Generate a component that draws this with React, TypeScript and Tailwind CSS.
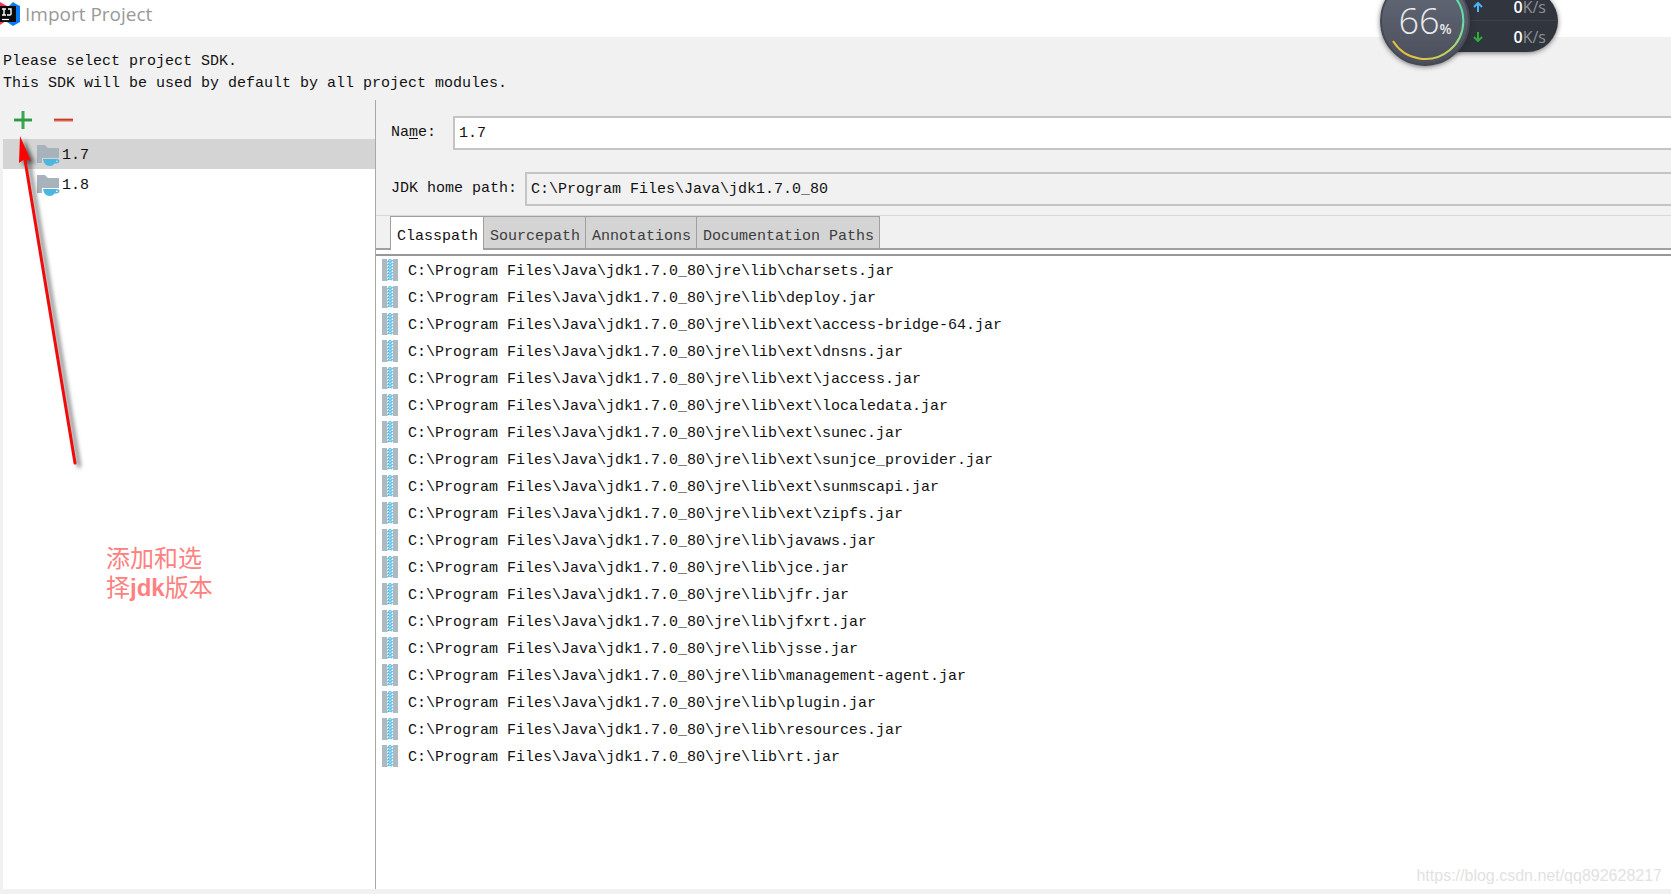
const JRE = "C:\\Program Files\\Java\\jdk1.7.0_80\\jre\\lib\\";

const jars = [
  "charsets.jar",
  "deploy.jar",
  "ext\\access-bridge-64.jar",
  "ext\\dnsns.jar",
  "ext\\jaccess.jar",
  "ext\\localedata.jar",
  "ext\\sunec.jar",
  "ext\\sunjce_provider.jar",
  "ext\\sunmscapi.jar",
  "ext\\zipfs.jar",
  "javaws.jar",
  "jce.jar",
  "jfr.jar",
  "jfxrt.jar",
  "jsse.jar",
  "management-agent.jar",
  "plugin.jar",
  "resources.jar",
  "rt.jar",
];

const tabs = ["Classpath", "Sourcepath", "Annotations", "Documentation Paths"];
const sdks = ["1.7", "1.8"];
const teeth = [0, 1, 2, 3, 4, 5, 6];

function IdeaLogo() {
  return (
    <svg width="20" height="26" viewBox="0 0 20 26" aria-hidden="true">
      <path d="M0 1l7 4v14l-7 5z" fill="#fe315d" />
      <path d="M9 5l4-4 3 2 4 2v16l-7 4-6-4z" fill="#087cfa" />
      <path d="M0 5h16v16H0z" fill="#0b0b0b" />
      <path d="M2 8h4M4 8v6M2 14h4M8 8h3v5q0 1-1 1H7" fill="none" stroke="#fff" strokeWidth="1.4" />
      <path d="M2 18.500h7" stroke="#fff" strokeWidth="1.2" />
    </svg>
  );
}

function SdkIcon() {
  return (
    <svg width="23" height="22" viewBox="0 0 23 22" aria-hidden="true">
      <path d="M0 0h8l3 3h11v10H5v5H0z" fill="#a7b2ba" />
      <path d="M6 14h13.500q3 0 3 2t-3.500 2.500h-1.500q-1.500 2.500-5 2.500-5.500 0-6.500-7zm13 1.500v1.500q2 0 2-.8t-2-.7z" fill="#4bb6e0" />
    </svg>
  );
}

function JarIcon() {
  return (
    <svg width="16" height="22" viewBox="0 0 16 22" className="block" aria-hidden="true">
      <path d="M0 0h5v22H0zM11 0h5v22h-5z" fill="#adb8bf" />
      <path d="M5 0h6v22H5z" fill="#f3fafd" />
      {teeth.map((i) => (
        <path key={i} d={`M6 ${i * 3 + 1.5}l2-1 3 1.500M5 ${i * 3 + 3}l3-1 2 1`} fill="none" stroke="#45b5e2" strokeWidth="1" />
      ))}
    </svg>
  );
}

function SpeedWidget() {
  return (
    <div className="absolute right-[113px] -top-6 z-10 flex h-[90px] w-[178px] items-center font-['Open_Sans',sans-serif]">
      <div className="absolute left-10 top-[14px] h-[62px] w-[138px] rounded-r-full bg-[#31353e] shadow-[0_1px_5px_rgba(40,30,40,0.6)]">
        <div className="flex h-[31px] items-center justify-between border-b border-[#3d424b] pl-[53px] pr-3 pt-1">
          <svg width="10" height="10" viewBox="0 0 10 10" aria-hidden="true">
            <path d="M5 10V1M1 5l4-4 4 4" fill="none" stroke="#4ab6fa" strokeWidth="2" />
          </svg>
          <span className="text-base leading-3 text-[#8d9096]"><b className="font-semibold text-white">0</b>K/s</span>
        </div>
        <div className="flex h-[31px] items-center justify-between pl-[53px] pr-3">
          <svg width="10" height="10" viewBox="0 0 10 10" aria-hidden="true">
            <path d="M5 0v9M1 5l4 4 4-4" fill="none" stroke="#2fae3c" strokeWidth="2" />
          </svg>
          <span className="text-base leading-3 text-[#8d9096]"><b className="font-semibold text-white">0</b>K/s</span>
        </div>
      </div>
      <div className="relative flex size-[90px] items-center justify-center rounded-full border-2 border-[#454954] bg-linear-to-b from-[#666b7a] to-[#4b4f5b] shadow-[0_1px_5px_rgba(40,30,40,0.6)]">
        <svg className="absolute inset-0" width="86" height="86" viewBox="0 0 86 86" aria-hidden="true">
          <defs>
            <linearGradient id="gauge" x1="0" y1="1" x2="1" y2="0">
              <stop offset="0.1" stopColor="#e9bd3c" />
              <stop offset="0.5" stopColor="#b5d968" />
              <stop offset="0.8" stopColor="#5fe0a8" />
            </linearGradient>
          </defs>
          <path d="M11 63a38 38 0 1 0 58-48" fill="none" stroke="url(#gauge)" strokeWidth="2" />
        </svg>
        <span className="flex items-baseline text-4xl font-light leading-8 text-[#e8e9eb]">
          66<span className="text-sm font-semibold leading-4">%</span>
        </span>
      </div>
    </div>
  );
}

export default function App() {
  return (
    <div className="relative flex min-h-screen flex-col overflow-hidden bg-[#f1f1f1] font-['Liberation_Mono',monospace] text-[15px] leading-[22px] text-[#111]">
      <header className="flex h-[37px] items-start gap-[5px] bg-white pt-px">
        <IdeaLogo />
        <h1 className="font-['Open_Sans',sans-serif] text-[19px] leading-[26px] text-[#999]">Import Project</h1>
      </header>
      <SpeedWidget />

      <div className="flex h-[63px] flex-col pl-[3px] pt-[14px]">
        <p>Please select project SDK.</p>
        <p>This SDK will be used by default by all project modules.</p>
      </div>

      <main className="mb-[5px] ml-[3px] flex grow">
        <aside className="flex w-[373px] shrink-0 flex-col border-r border-[#a8a8a8]">
          <div className="flex h-[39px] items-center gap-[22px] pl-[11px]">
            <button type="button" aria-label="Add SDK">
              <svg width="18" height="18" viewBox="0 0 18 18" className="block">
                <path d="M9 0v18M0 9h18" stroke="#37a853" strokeWidth="3" />
                <path d="M0 9h18" stroke="#248c3c" strokeWidth="1" />
              </svg>
            </button>
            <button type="button" aria-label="Remove SDK">
              <svg width="19" height="18" viewBox="0 0 19 18" className="block">
                <path d="M0 9h19" stroke="#e0604c" strokeWidth="3" />
                <path d="M0 8.500h19" stroke="#b34537" strokeWidth="1" />
              </svg>
            </button>
          </div>
          <ul className="grow bg-white">
            {sdks.map((sdk, i) => (
              <li key={sdk} className={`flex h-[30px] items-start gap-[2px] pl-[34px] pt-[6px] ${i === 0 ? "bg-[#d4d4d4]" : ""}`}>
                <SdkIcon />
                <span>{sdk}</span>
              </li>
            ))}
          </ul>
        </aside>

        <section className="flex min-w-0 grow flex-col">
          <div className="flex h-[115px] flex-col gap-[22px] pl-[15px] pt-4">
            <div className="flex h-[34px] items-center">
              <label htmlFor="sdk-name" className="w-[62px]">Na<u className="underline-offset-2">m</u>e:</label>
              <input id="sdk-name" defaultValue="1.7" className="h-[34px] min-w-0 grow border-2 border-r-0 border-[#c4c4c4] bg-white pl-1 outline-none" />
            </div>
            <div className="flex h-[34px] items-center">
              <label htmlFor="sdk-home" className="w-[134px]">JDK home path:</label>
              <input id="sdk-home" readOnly defaultValue={"C:\\Program Files\\Java\\jdk1.7.0_80"} className="h-[34px] min-w-0 grow border-2 border-r-0 border-[#c4c4c4] bg-[#f1f1f1] pl-1 outline-none" />
            </div>
          </div>

          <div role="tablist" className="flex h-[35px] border-b-2 border-t border-b-[#a0a0a0] border-t-[#d8d8d8] pl-[14px]">
            {tabs.map((tab, i) => (
              <button
                key={tab}
                type="button"
                role="tab"
                aria-selected={i === 0}
                className={`whitespace-nowrap border-[#a0a0a0] pl-[6px] pr-[5px] pt-[9px] ${i === 0 ? "-mb-[2px] border-x border-t bg-white pb-[2px]" : "border-r border-t bg-[#d4d4d4] text-[#3c3c3c]"}`}
              >
                {tab}
              </button>
            ))}
          </div>
          <div className="h-[6px] border-b-2 border-[#989898] bg-white" />
          <ul className="grow bg-white pt-px">
            {jars.map((jar) => (
              <li key={jar} className="flex h-[27px] items-start gap-[10px] pl-[6px] pt-[2px]">
                <JarIcon />
                <span className="whitespace-nowrap pt-[2px]">{JRE + jar}</span>
              </li>
            ))}
          </ul>
        </section>
      </main>

      <svg className="pointer-events-none absolute left-0 top-[130px] drop-shadow-[4px_3px_2px_rgba(0,0,0,0.6)]" width="90" height="345" viewBox="0 0 90 345" aria-hidden="true">
        <path d="M25 30L75 333" stroke="#f00b0b" strokeWidth="3" strokeLinecap="round" />
        <path d="M20 6l11 25-6-2-6 4z" fill="#f00" />
      </svg>
      <p className="absolute left-[106px] top-[544px] font-['Liberation_Sans','Noto_Sans_CJK_SC',sans-serif] text-2xl leading-[29px] text-[#ff8080]">
        添加和选<br />择<b>jdk</b>版本
      </p>
      <p className="absolute bottom-[7px] right-[9px] font-['Liberation_Sans',sans-serif] text-base leading-[22px] text-[#e2e2e2]">
        https://blog.csdn.net/qq892628217
      </p>
    </div>
  );
}
